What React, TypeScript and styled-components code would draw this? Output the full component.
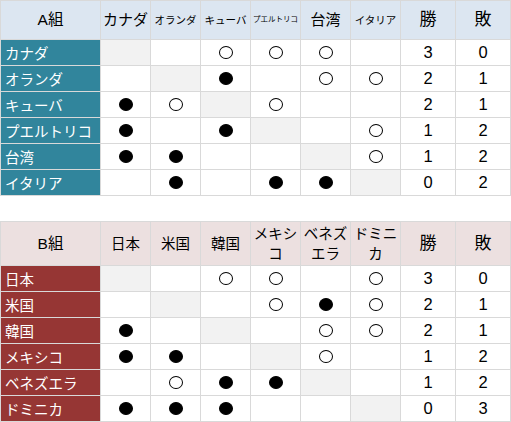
import { Fragment } from "react";
import styled, { createGlobalStyle } from "styled-components";

const GlobalStyle = createGlobalStyle`
  body {
    margin: 0;
    background: #ffffff;
    font-family: "Liberation Sans", "Noto Sans CJK JP", sans-serif;
  }
`;

type Result = "" | "win" | "lose" | "self";

interface Team {
  name: string;
  results: Result[];
  wins: number;
  losses: number;
}

interface Pool {
  title: string;
  headerBg: string;
  labelBg: string;
  headerHeight: number;
  columns: { label: string; size: number }[];
  teams: Team[];
}

const w = "win" as const;
const l = "lose" as const;
const s = "self" as const;

const pools: Pool[] = [
  {
    title: "A組",
    headerBg: "#dce6f1",
    labelBg: "#31859c",
    headerHeight: 38,
    columns: [
      { label: "カナダ", size: 15 },
      { label: "オランダ", size: 10.5 },
      { label: "キューバ", size: 10.5 },
      { label: "プエルトリコ", size: 7.5 },
      { label: "台湾", size: 15 },
      { label: "イタリア", size: 10.5 },
    ],
    teams: [
      { name: "カナダ", results: [s, "", w, w, w, ""], wins: 3, losses: 0 },
      { name: "オランダ", results: ["", s, l, "", w, w], wins: 2, losses: 1 },
      { name: "キューバ", results: [l, w, s, w, "", ""], wins: 2, losses: 1 },
      { name: "プエルトリコ", results: [l, "", l, s, "", w], wins: 1, losses: 2 },
      { name: "台湾", results: [l, l, "", "", s, w], wins: 1, losses: 2 },
      { name: "イタリア", results: ["", l, "", l, l, s], wins: 0, losses: 2 },
    ],
  },
  {
    title: "B組",
    headerBg: "#ece0e0",
    labelBg: "#963634",
    headerHeight: 43,
    columns: [
      { label: "日本", size: 14.5 },
      { label: "米国", size: 14.5 },
      { label: "韓国", size: 14.5 },
      { label: "メキシコ", size: 14.5 },
      { label: "ベネズエラ", size: 14.5 },
      { label: "ドミニカ", size: 14.5 },
    ],
    teams: [
      { name: "日本", results: [s, "", w, w, "", w], wins: 3, losses: 0 },
      { name: "米国", results: ["", s, "", w, l, w], wins: 2, losses: 1 },
      { name: "韓国", results: [l, "", s, "", w, w], wins: 2, losses: 1 },
      { name: "メキシコ", results: [l, l, "", s, w, ""], wins: 1, losses: 2 },
      { name: "ベネズエラ", results: ["", w, l, l, s, ""], wins: 1, losses: 2 },
      { name: "ドミニカ", results: [l, l, l, "", "", s], wins: 0, losses: 3 },
    ],
  },
];

const Page = styled.div`
  display: flex;
  flex-direction: column;
  gap: 25px;
  width: 511px;
`;

const Grid = styled.div<{ $headerHeight: number }>`
  display: grid;
  grid-template-columns: 99px repeat(6, 49px) 54px 54px;
  grid-template-rows: ${(p) => p.$headerHeight}px repeat(6, 25px);
  gap: 1px;
  padding: 1px;
  background: #d9d9d9;
`;

const HeadCell = styled.div<{ $bg: string; $size: number }>`
  display: flex;
  align-items: center;
  justify-content: center;
  text-align: center;
  background: ${(p) => p.$bg};
  color: #000000;
  font-size: ${(p) => p.$size}px;
  line-height: 20px;
  word-break: break-all;
  overflow: hidden;
`;

const TeamLabel = styled.div<{ $bg: string }>`
  display: flex;
  align-items: center;
  padding-left: 4px;
  background: ${(p) => p.$bg};
  color: #ffffff;
  font-size: 14.5px;
  white-space: nowrap;
`;

const ResultCell = styled.div<{ $self: boolean }>`
  display: flex;
  align-items: center;
  justify-content: center;
  background: ${(p) => (p.$self ? "#f2f2f2" : "#ffffff")};
`;

const Mark = styled.span<{ $filled: boolean }>`
  display: block;
  width: 14px;
  height: 13px;
  box-sizing: border-box;
  border-radius: 50%;
  border: 1px solid #000000;
  background: ${(p) => (p.$filled ? "#000000" : "#ffffff")};
`;

const CountCell = styled.div`
  display: flex;
  align-items: center;
  justify-content: center;
  background: #ffffff;
  color: #000000;
  font-family: "Liberation Sans", Arial, sans-serif;
  font-size: 16.5px;
`;

function PoolTable({ pool }: { pool: Pool }) {
  return (
    <Grid $headerHeight={pool.headerHeight}>
      <HeadCell $bg={pool.headerBg} $size={15.5}>
        {pool.title}
      </HeadCell>
      {pool.columns.map((c) => (
        <HeadCell key={c.label} $bg={pool.headerBg} $size={c.size}>
          {c.label}
        </HeadCell>
      ))}
      <HeadCell $bg={pool.headerBg} $size={17}>
        勝
      </HeadCell>
      <HeadCell $bg={pool.headerBg} $size={17}>
        敗
      </HeadCell>
      {pool.teams.map((t) => (
        <Fragment key={t.name}>
          <TeamLabel $bg={pool.labelBg}>{t.name}</TeamLabel>
          {t.results.map((r, i) => (
            <ResultCell key={i} $self={r === "self"}>
              {(r === "win" || r === "lose") && <Mark $filled={r === "lose"} />}
            </ResultCell>
          ))}
          <CountCell>{t.wins}</CountCell>
          <CountCell>{t.losses}</CountCell>
        </Fragment>
      ))}
    </Grid>
  );
}

export default function App() {
  return (
    <>
      <GlobalStyle />
      <Page>
        {pools.map((p) => (
          <PoolTable key={p.title} pool={p} />
        ))}
      </Page>
    </>
  );
}
